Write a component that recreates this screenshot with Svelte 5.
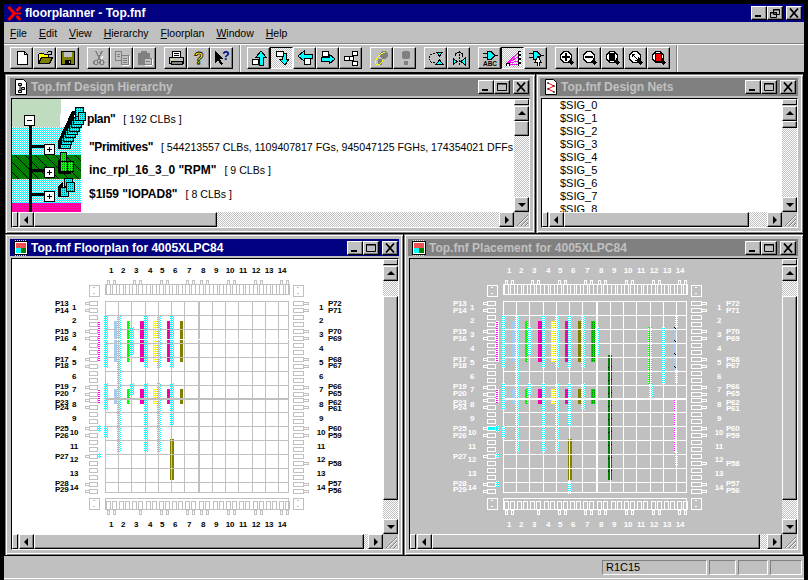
<script>
	const menus = [
		['F', 'ile'],
		['E', 'dit'],
		['V', 'iew'],
		['H', 'ierarchy'],
		['F', 'loorplan'],
		['W', 'indow'],
		['H', 'elp']
	]

	const lens = (inner) =>
		`<path d="M10 10l4 4" stroke="#000" stroke-width="3" fill="none"/><circle cx="7" cy="7" r="5.5" fill="#fff" stroke="#000" stroke-width="1.4"/>${inner}`

	const icons = {
		new: `<path d="M3.5 1.5h7l3 3v10h-10z" fill="#fff" stroke="#000"/><path d="M10.5 1.5v3h3" fill="none" stroke="#000"/>`,
		open: `<path d="M1.5 13.5v-9l1-1h4l1 1h4v2" fill="#ff0" stroke="#000"/><path d="M1.5 13.5l3-6h11l-3 6z" fill="#808000" stroke="#000"/><path d="M10 3c1-2 3-2 4-1M14 1v3h-2" fill="none" stroke="#000"/>`,
		save: `<path d="M1.5 1.5h13v13h-13z" fill="#808000" stroke="#000"/><path d="M4 2h8v5H4z" fill="#c0c0c0"/><path d="M5 10h6v4H5z" fill="#000"/><path d="M9 11h1v2H9z" fill="#c0c0c0"/>`,
		cut: `<path d="M5 1l4 9M11 1l-4 9" stroke="#808080" stroke-width="1.5" fill="none"/><circle cx="5" cy="12.5" r="2" fill="none" stroke="#808080" stroke-width="1.3"/><circle cx="11" cy="12.5" r="2" fill="none" stroke="#808080" stroke-width="1.3"/><path d="M12 6l-2 3" stroke="#fff"/>`,
		copy: `<path d="M1.5 1.5h6v9h-6zM7.5 5.5h7v9h-7z" fill="#c0c0c0" stroke="#808080"/><path d="M3 4h3M3 6h3M9 8h4M9 10h4M9 12h4" stroke="#808080"/><path d="M8 15h7M15 6v9" stroke="#fff"/>`,
		paste: `<path d="M1.5 3.5h11v11h-11z" fill="#808080" stroke="#808080"/><path d="M4 1h6v3H4z" fill="#808080"/><path d="M7.5 8.5h7v6h-7z" fill="#c0c0c0" stroke="#808080"/><path d="M9 11h4" stroke="#808080"/><path d="M8 15h7M15 9v6" stroke="#fff"/>`,
		print: `<path d="M4.5 1.5h8v6h-8z" fill="#fff" stroke="#000"/><path d="M6 3h5M6 5h5" stroke="#000"/><path d="M1.5 7.5h14v6h-14z" fill="#c0c0c0" stroke="#000"/><path d="M3 11.5h11v3H3z" fill="#808080" stroke="#000"/><path d="M3 9h2" stroke="#ff0"/>`,
		help: `<text x="8" y="13.500" text-anchor="middle" font-family="Liberation Sans" font-weight="700" font-size="16" fill="#ff0" stroke="#000" stroke-width="0.800">?</text>`,
		what: `<path d="M1 1v12l3-3 3 5 2-1-3-5h4z" fill="#000"/><text x="12" y="10" text-anchor="middle" font-family="Liberation Sans" font-weight="700" font-size="12" fill="#000080">?</text>`,
		up: `<path d="M10 1l5 6h-3v8H8V7H5z" fill="#0ff" stroke="#000"/><path d="M1.5 9.5h6v5h-6z" fill="#fff" stroke="#000"/>`,
		down: `<path d="M11 15l4-6h-3V3H8v6H5z" fill="#0ff" stroke="#000"/><path d="M2.5 1.5h7v5h-7z" fill="#fff" stroke="#000"/>`,
		left: `<path d="M1 6l6-5v3h8v4H7v3z" fill="#0ff" stroke="#000"/><path d="M7.5 8.5h6v6h-6z" fill="#fff" stroke="#000"/>`,
		right: `<path d="M15 9l-6-5v3H1v4h8v3z" fill="#0ff" stroke="#000"/><path d="M2.5 1.5h6v5h-6z" fill="#fff" stroke="#000"/>`,
		tree: `<path d="M1.5 6.5h5v4h-5zM9.5 1.5h5v4h-5zM6.5 6.5h4v4h-4zM9.5 11.5h5v4h-5z" fill="#fff" stroke="#000"/>`,
		foot: `<ellipse cx="10" cy="5" rx="4" ry="4" fill="#808080"/><ellipse cx="6" cy="12" rx="2.5" ry="3" fill="#808080"/><path d="M2 14C0 9 7 3 11 2" fill="none" stroke="#ff0"/><path d="M2 14c4 3 7-3 6-4" fill="none" stroke="#ff0"/>`,
		foot2: `<ellipse cx="9" cy="5" rx="4.5" ry="4.5" fill="#808080"/><ellipse cx="9" cy="13" rx="2.5" ry="2.5" fill="#808080"/>`,
		swap: `<path d="M8 2h7l-3.500 4zM8 14h7l-3.500-4z" fill="#0ff" stroke="#000"/><path d="M7 4C2 3 0 7 2 10M7 12C4 13 3 12 2 11" fill="none" stroke="#000" stroke-dasharray="2 1"/>`,
		mirror: `<path d="M2 8v7l4-3.500zM14 8v7l-4-3.500z" fill="#0ff" stroke="#000"/><path d="M8 1v14" stroke="#000" stroke-dasharray="2 1"/><path d="M4 7C3 1 13 1 12 7" fill="none" stroke="#000"/>`,
		abc: `<path d="M5 1.500h4l4 4-4 4H5z" fill="#0ff" stroke="#000"/><path d="M1 3.500h4M1 7.500h4M13 5.500h3" stroke="#000"/><text x="8" y="16" text-anchor="middle" font-family="Liberation Sans" font-weight="700" font-size="6.500" fill="#000">ABC</text>`,
		rats: `<path d="M1 14L13 3M1 14l12-7M1 14l12-3M1 14h12" stroke="#f0f" fill="none"/><path d="M1 13h3v3H1zM13 1h3v3h-3zM13 5h3v3h-3zM13 9h3v3h-3zM13 13h3v3h-3z" fill="#fff" stroke="#000"/>`,
		probe: `<path d="M5 1.500h4l4 4-4 4H5z" fill="#0ff" stroke="#000"/><path d="M1 3.500h4M1 7.500h4M13 5.500h3" stroke="#000"/><path d="M10 6l-3 6h2v4h2v-4h2z" fill="#fff" stroke="#000"/>`,
		zin: lens(`<path d="M3 6h8v2H3zM6 3h2v8H6z" fill="#000"/>`),
		zout: lens(`<path d="M3 6h8v2H3z" fill="#000"/>`),
		zfit: lens(`<path d="M4 3h6v8H4z" fill="#000"/>`),
		zfull: lens(`<path d="M4 4l6 6M4 4h3M4 4v3M10 10H7M10 10V7" fill="none" stroke="#000"/>`),
		zsel: lens(`<path d="M4 3h6v8H4z" fill="#f00" stroke="#000"/>`)
	}

	const tools = [
		['new', 'open', 'save'],
		['cut', 'copy', 'paste'],
		['print', 'help', 'what'],
		'sep',
		['up', 'down!', 'left', 'right', 'tree'],
		['foot', 'foot2'],
		['swap', 'mirror'],
		['abc', 'rats!', 'probe'],
		['zin', 'zout', 'zfit', 'zfull', 'zsel'],
		'sep'
	]

	const nets = Array.from({ length: 9 }, (_, i) => `$SIG_${i}`)

	const colX = [105, 118, 131, 145, 158, 171, 184, 198, 212, 225, 238, 252, 265, 278]
	const colNum = [111, 123, 136, 150, 162, 175, 189, 203, 216, 230, 243, 256, 269, 282]
	const rowY = [301, 315, 329, 343, 357, 371, 385, 398, 412, 426, 440, 454, 468, 482]
	const rowNum = [310, 323, 337, 351, 365, 379, 392, 407, 421, 435, 449, 462, 476, 490]
	const padCols = [0, 2, 4, 6, 7, 9, 11, 13]
	const padRows = [0, 2, 4, 6, 7, 9, 13]

	const leftPins = [
		['P13', 306], ['P14', 313], ['P15', 334], ['P16', 341], ['P17', 362], ['P18', 368],
		['P19', 389], ['P20', 396], ['P23', 405], ['P24', 410], ['P25', 431], ['P26', 438],
		['P27', 459], ['P28', 486], ['P29', 492]
	]
	const rightPins = [
		['P72', 306], ['P71', 313], ['P70', 334], ['P69', 341], ['P68', 362], ['P67', 368],
		['P66', 389], ['P65', 396], ['P62', 405], ['P61', 411], ['P60', 431], ['P59', 438],
		['P58', 466], ['P57', 486], ['P56', 493]
	]

	// x, top, bottom, fill, width
	const cells = [
		[104, 315, 368, 'cy'], [104, 383, 410, 'cy'], [104, 426, 438, 'cy'],
		[117, 315, 452, 'cy'],
		[130, 327, 355, 'cy'], [130, 383, 395, 'cy'],
		[144, 315, 368, 'cy'], [144, 383, 452, 'cy'],
		[157, 315, 368, 'cy'], [157, 383, 452, 'cy'],
		[170, 315, 368, 'cy'], [170, 383, 425, 'cy'],
		[98, 321, 362, 'mg', 3], [98, 389, 403, 'mg', 3],
		[98, 425, 432, 'cy', 3], [98, 453, 458, 'cy', 3],
		[114, 321, 362, '#a6caf0', 3], [114, 389, 404, '#a6caf0', 3],
		[127, 321, 362, 'gr', 3], [127, 389, 404, 'gr', 3],
		[140, 321, 362, 'rd'], [140, 389, 404, 'rd'],
		[153, 321, 362, 'yl'], [153, 389, 404, 'yl'],
		[167, 321, 362, 'rd', 3], [167, 389, 404, 'rd', 3],
		[180, 321, 362, '#808000', 3], [180, 389, 404, '#808000', 3],
		[170, 439, 480, '#808000']
	]

	const placedCells = [
		[183, 315, 368, 'cy'], [183, 383, 410, 'cy'],
		[197, 327, 355, 'cy'],
		[193, 321, 362, 'dg'], [193, 389, 404, 'dg'],
		[210, 355, 480, 'tk'],
		[250, 327, 384, 'gr'], [251, 384, 397, 'cy'],
		[264, 327, 384, 'cy'],
		[277, 315, 327, 'cy', 3], [276, 327, 370, 'bt', 3], [277, 370, 384, 'cy', 3],
		[276, 398, 452, 'mg', 3], [277, 452, 465, 'cy', 3],
		[170, 481, 494, 'cy'], [98, 481, 487, 'cy', 3]
	]

	const fillOf = (f) => (f.length === 2 ? `url(#h-${f})` : f)
</script>

{#snippet icon(name)}
	<svg class="ico" width="16" height="16" viewBox="0 0 16 16">{@html icons[name]}</svg>
{/snippet}

{#snippet capBtn(kind)}
	<span class="cap">
		<svg width="12" height="10" viewBox="0 0 12 10">
			{#if kind === 'min'}
				<rect x="2" y="7" width="6" height="2" fill="#000" />
			{:else if kind === 'max'}
				<path d="M1.500 1.500h9v7h-9z M1 2h10" fill="none" stroke="#000" />
			{:else if kind === 'restore'}
				<path d="M4.500 1.500h6v5h-6z M4 2h7 M1.500 4.500h6v5h-6z M1 5h7" fill="#c0c0c0" stroke="#000" />
			{:else}
				<path d="M2 0.500l8 9M10 0.500l-8 9" fill="none" stroke="#000" stroke-width="1.800" />
			{/if}
		</svg>
	</span>
{/snippet}

{#snippet docIcon(kind)}
	<svg class="docicon" width="14" height="16" viewBox="0 0 14 16">
		{#if kind === 'plan'}
			<rect x="0.500" y="1.500" width="13" height="13" fill="#fff" stroke="#000" />
			<rect x="2" y="3" width="10" height="5" fill="#f05050" />
			<rect x="2" y="8" width="5" height="5" fill="#0ff" />
			<rect x="7" y="8" width="5" height="5" fill="#008000" />
			<path d="M1 0.500h12M1 15.500h12" stroke="#ff0" stroke-dasharray="1 1" />
		{:else}
			<path d="M1.500 0.500h8l3 3v12h-11z" fill="#fff" stroke="#000" />
			{#if kind === 'hier'}
				<path d="M4.500 4.500h3v2h-3zM7.500 8.500h3v2h-3zM4.500 11.500h3v2h-3zM6 7v5" fill="#c0c0c0" stroke="#000" />
			{:else}
				<path d="M4 4l6 3-6 3 6 3" fill="none" stroke="#f00" />
				<path d="M3 4h2M3 10h2M9 7h2M9 13h2" stroke="#000" />
			{/if}
		{/if}
	</svg>
{/snippet}

{#snippet titleBar(text, kind, active)}
	<div class="title" class:active>
		{@render docIcon(kind)}
		<span class="title-text">{text}</span>
		<span class="caps">
			{@render capBtn('min')}
			{@render capBtn('max')}
			<span class="capgap"></span>
			{@render capBtn('close')}
		</span>
	</div>
{/snippet}

{#snippet arrow(dir)}
	<span class="sbtn arrow-{dir}"></span>
{/snippet}

{#snippet vbar(before, thumb)}
	<div class="vbar">
		<span class="split-v"></span>
		{@render arrow('up')}
		{#if before}<span class="dither" style="height:{before}px"></span>{/if}
		<span class="thumb" style="height:{thumb}px"></span>
		<span class="dither grow"></span>
		{@render arrow('down')}
	</div>
{/snippet}

{#snippet hbar(thumb)}
	<div class="hbar">
		<span class="split-h"></span>
		{@render arrow('left')}
		<span class="thumb" style="width:{thumb}px"></span>
		<span class="dither grow"></span>
		{@render arrow('right')}
	</div>
{/snippet}

{#snippet grip()}
	<svg class="grip" width="15" height="15" viewBox="0 0 15 15">
		<path d="M14 3L3 14M14 7l-7 7M14 11l-3 3" stroke="#808080" fill="none" />
		<path d="M14 4L4 14M14 8l-6 6M14 12l-2 2" stroke="#fff" fill="none" />
	</svg>
{/snippet}

{#snippet floorplan(fg, text, placed)}
	<svg class="plan" width="371" height="275" viewBox="12 259 371 275">
		{#each cells as [x, a, b, f, w = 4]}
			<rect {x} y={a} width={w} height={b - a} fill={fillOf(f)} />
		{/each}
		{#if placed}
			{#each placedCells as [x, a, b, f, w = 4]}
				<rect {x} y={a} width={w} height={b - a} fill={fillOf(f)} />
			{/each}
			<rect x="90" y="427" width="10" height="3" fill="#0ff" />
		{/if}

		{#each colX as x, i}
			<rect {x} y="301" width={i === 7 ? 2 : 1} height="192" fill={fg} />
		{/each}
		<rect x="288" y="301" width="1" height="192" fill={fg} />
		{#each rowY as y, i}
			<rect x="105" {y} width="184" height={i === 7 ? 2 : 1} fill={fg} />
		{/each}
		<rect x="105" y="492" width="184" height="1" fill={fg} />
		{#if !placed}
			<rect x="97" y="339" width="195" height="1" fill="#fff" />
		{/if}

		<g fill="none" stroke={fg}>
			<path d="M105.500 284.500h183v10h-183zM105.500 498.500h183v11h-183z" />
			{#each colX as x, i}
				<path d="M{x + 1.5} 284.500h4v10h-4zM{x + 7.5} 284.500h4v10h-4z" />
				<path d="M{x + 1.5} 501.500h4v8h-4zM{x + 7.5} 501.500h4v8h-4z" />
				{#if padCols.includes(i)}
					<path d="M{x + 2.5} 280.500h2v4h-2zM{x + 8.5} 280.500h2v4h-2z" />
					{#if i === 2}
						<path d="M{x + 8.5} 510.500h2v4h-2z" />
					{:else}
						<path d="M{x + 2.5} 510.500h2v4h-2zM{x + 8.5} 510.500h2v4h-2z" />
					{/if}
				{/if}
			{/each}
			{#each rowY as y, i}
				<path d="M89.500 {y + 0.5}h8v4h-8zM89.500 {y + 7.5}h8v4h-8z" />
				<path d="M293.500 {y + 0.5}h10v4h-10zM293.500 {y + 7.5}h10v4h-10z" />
				{#if padRows.includes(i)}
					<path d="M85.500 {y + 1.5}h4v2h-4zM85.500 {y + 8.5}h4v2h-4z" />
					<path d="M303.500 {y + 1.5}h5v2h-5zM303.500 {y + 8.5}h5v2h-5z" />
				{:else if i === 11}
					<path d="M85.500 {y + 1.5}h4v2h-4z" />
					<path d="M303.500 {y + 8.5}h5v2h-5z" />
				{/if}
			{/each}
			{#each [[89, 285], [293, 285], [89, 498], [293, 498]] as [x, y]}
				<path d="M{x + 0.5} {y + 0.5}h10v11h-10z" />
				<path d="M{x + 3.5} {y + 2.5}h2M{x + 3.5} {y + 8.5}h2" />
			{/each}
		</g>

		<g class="labels" fill={text}>
			{#each colNum as x, i}
				<text {x} y="273" text-anchor="middle">{i + 1}</text>
				<text {x} y="527" text-anchor="middle">{i + 1}</text>
			{/each}
			{#each rowNum as y, i}
				<text x="74" {y} text-anchor="middle">{i + 1}</text>
				<text x="321" {y} text-anchor="middle">{i + 1}</text>
			{/each}
			{#each leftPins as [name, y]}
				<text x="55" {y}>{name}</text>
			{/each}
			{#each rightPins as [name, y]}
				<text x="328" {y}>{name}</text>
			{/each}
		</g>
	</svg>
{/snippet}

<svg class="defs" width="0" height="0" aria-hidden="true">
	<defs>
		<pattern id="h-cy" width="2" height="2" patternUnits="userSpaceOnUse">
			<rect width="2" height="2" fill="#fff" />
			<rect width="1" height="1" fill="#0ff" />
			<rect x="1" y="1" width="1" height="1" fill="#0ff" />
		</pattern>
		<pattern id="h-mg" width="3" height="2" patternUnits="userSpaceOnUse">
			<rect width="3" height="2" fill="#fff" />
			<rect width="1" height="1" fill="#f0f" />
			<rect x="2" width="1" height="1" fill="#f0f" />
		</pattern>
		<pattern id="h-gr" width="4" height="2" patternUnits="userSpaceOnUse">
			<rect width="4" height="2" fill="#0f0" />
			<rect x="1" width="2" height="1" fill="#fff" />
		</pattern>
		<pattern id="h-rd" width="2" height="2" patternUnits="userSpaceOnUse">
			<rect width="2" height="2" fill="#ff00c0" />
			<rect width="1" height="1" fill="#e00090" />
		</pattern>
		<pattern id="h-yl" width="2" height="2" patternUnits="userSpaceOnUse">
			<rect width="2" height="2" fill="#ff0" />
			<rect width="1" height="1" fill="#fff" />
		</pattern>
		<pattern id="h-dg" width="2" height="2" patternUnits="userSpaceOnUse">
			<rect width="2" height="2" fill="#00e000" />
			<rect width="1" height="1" fill="#008000" />
		</pattern>
		<pattern id="h-tk" width="4" height="13" patternUnits="userSpaceOnUse">
			<rect width="4" height="13" fill="#008000" />
			<path d="M1 2l2 2" stroke="#000" />
		</pattern>
		<pattern id="h-bt" width="4" height="13" patternUnits="userSpaceOnUse">
			<rect width="4" height="13" fill="#a6caf0" />
			<path d="M0 2l2 2" stroke="#000" />
		</pattern>
		<pattern id="dots" width="2" height="2" patternUnits="userSpaceOnUse">
			<rect width="2" height="2" fill="#fff" />
			<rect width="1" height="1" fill="#0ff" />
			<rect x="1" y="1" width="1" height="1" fill="#0ff" />
		</pattern>
		<pattern id="reds" width="2" height="2" patternUnits="userSpaceOnUse">
			<rect width="2" height="2" fill="#ff00c0" />
			<rect width="1" height="1" fill="#ff0080" />
		</pattern>
		<pattern id="dgreen" width="10" height="10" patternUnits="userSpaceOnUse">
			<rect width="10" height="10" fill="#008000" />
			<path d="M0 0l10 10" stroke="#000" />
		</pattern>
		<pattern id="cube" width="2" height="2" patternUnits="userSpaceOnUse">
			<rect width="2" height="2" fill="#0ff" />
			<rect width="1" height="1" fill="#008080" />
		</pattern>
		<pattern id="gcube" width="2" height="2" patternUnits="userSpaceOnUse">
			<rect width="2" height="2" fill="#0f0" />
			<rect width="1" height="1" fill="#008000" />
		</pattern>
	</defs>
</svg>

<div class="screen">
	<div class="app">
		<div class="title main active">
			<svg class="logo" width="15" height="15" viewBox="0 0 15 15">
				<path d="M1.500 1l6 6.500-6 6.500M13.500 1L9.500 5M13.500 14l-4-4" fill="none" stroke="#f00" stroke-width="3" />
				<path d="M9 7.500h5" stroke="#f00" stroke-width="2" />
			</svg>
			<span class="main-text">floorplanner - Top.fnf</span>
			<span class="caps main-caps">
				{@render capBtn('min')}
				{@render capBtn('restore')}
				<span class="capgap"></span>
				{@render capBtn('close')}
			</span>
		</div>

		<nav class="menu">
			{#each menus as [key, rest]}
				<span class="menu-item"><u>{key}</u>{rest}</span>
			{/each}
		</nav>

		<div class="toolbar">
			{#each tools as group}
				{#if group === 'sep'}
					<span class="sep"></span>
				{:else}
					<div class="tools">
						{#each group as tool}
							{@const on = tool.endsWith('!')}
							<span class="tool" class:on>{@render icon(on ? tool.slice(0, -1) : tool)}</span>
						{/each}
					</div>
				{/if}
			{/each}
		</div>

		<div class="mdi">
			<div class="row upper">
				<section class="win hier-win">
					{@render titleBar('Top.fnf Design Hierarchy', 'hier', false)}
					<div class="client">
						<div class="hier">
							<svg class="tree" width="76" height="113" viewBox="12 99 76 113">
								<rect x="12" y="99" width="49" height="28" fill="#c0dcc0" />
								<rect x="60" y="114" width="26" height="13" fill="#fff" />
								<rect x="12" y="127" width="69" height="28" fill="url(#dots)" />
								<rect x="12" y="155" width="69" height="24" fill="url(#dgreen)" />
								<rect x="12" y="179" width="69" height="24" fill="url(#dots)" />
								<rect x="12" y="203" width="69" height="9" fill="url(#reds)" />
								<rect x="29" y="125" width="3" height="87" fill="#000" />
								<path d="M30 146h15M30 170h15M30 194h15" stroke="#000" stroke-width="3" />
								{#each [[24, 115, '-'], [44, 144, '+'], [44, 167, '+'], [44, 191, '+']] as [x, y, s]}
									<rect x={x + 0.5} y={y + 0.5} width="10" height="10" fill="#fff" stroke="#000" />
									<path d="M{x + 3} {y + 5.5}h5" stroke="#000" />
									{#if s === '+'}
										<path d="M{x + 5.5} {y + 3}v5" stroke="#000" />
									{/if}
								{/each}
								<path d="M58 141l14-30h4l-13 38h-5z" fill="#000" />
								{#each Array(9) as _, i}
									<rect x={60 + i * 1.9} y={141 - i * 3.4} width="10" height="7" fill="url(#cube)" stroke="#000" />
								{/each}
								<rect x="75" y="107" width="8" height="9" fill="url(#cube)" stroke="#000" />
								<rect x="78" y="112" width="7" height="8" fill="url(#cube)" stroke="#000" />
								<rect x="58" y="160" width="3" height="13" fill="#000" />
								<rect x="60" y="152" width="6" height="9" fill="url(#gcube)" stroke="#000" />
								<rect x="60" y="161" width="7" height="10" fill="url(#gcube)" stroke="#000" />
								<rect x="67" y="161" width="6" height="10" fill="url(#gcube)" stroke="#000" />
								<path d="M59 171h12v3H59z" fill="#000" />
								<path d="M58 186l5-4v15h-5z" fill="#000" />
								<rect x="64" y="178" width="8" height="8" fill="url(#cube)" stroke="#000" />
								<rect x="60" y="187" width="8" height="9" fill="url(#cube)" stroke="#000" />
								<rect x="66" y="182" width="8" height="9" fill="url(#cube)" stroke="#000" />
							</svg>
							<div class="hier-rows">
								<div class="hrow first"><b class="tight">plan"</b><span class="count">[ 192 CLBs ]</span></div>
								<div class="hrow"><b class="tight">"Primitives"</b><span class="count">[ 544213557 CLBs, 1109407817 FGs, 945047125 FGHs, 174354021 DFFs</span></div>
								<div class="hrow"><b>inc_rpl_16_3_0 "RPM"</b><span class="count">[ 9 CLBs ]</span></div>
								<div class="hrow"><b>$1I59 "IOPAD8"</b><span class="count">[ 8 CLBs ]</span></div>
							</div>
						</div>
						{@render vbar(0, 15)}
						{@render hbar(183)}
						{@render grip()}
					</div>
				</section>

				<section class="win nets-win">
					{@render titleBar('Top.fnf Design Nets', 'nets', false)}
					<div class="client">
						<ul class="nets">
							{#each nets as net}
								<li>{net}</li>
							{/each}
						</ul>
						{@render vbar(0, 7)}
						{@render hbar(185)}
						{@render grip()}
					</div>
				</section>
			</div>

			<div class="row lower">
				<section class="win low plan-win">
					{@render titleBar('Top.fnf Floorplan for 4005XLPC84', 'plan', true)}
					<div class="client">
						{@render floorplan('#c0c0c0', '#000', false)}
						{@render vbar(15, 204)}
						{@render hbar(330)}
						{@render grip()}
					</div>
				</section>

				<section class="win low place-win">
					{@render titleBar('Top.fnf Placement for 4005XLPC84', 'plan', false)}
					<div class="client grey">
						{@render floorplan('#fff', '#fff', true)}
						{@render vbar(15, 204)}
						{@render hbar(328)}
						{@render grip()}
					</div>
				</section>
			</div>
		</div>

		<footer class="status">
			<span class="field coord">R1C15</span>
			<span class="field f2"></span>
			<span class="field f3"></span>
			<span class="field f4"></span>
		</footer>
	</div>
</div>

<style>
	:global(body) {
		margin: 0;
		background: #000;
	}
	.defs {
		position: absolute;
	}
	.screen {
		width: 808px;
		height: 580px;
		box-sizing: border-box;
		padding: 4px 4px 0;
		background: #000;
		overflow: hidden;
		font-family: 'Liberation Sans', Arial, sans-serif;
		font-size: 11px;
		color: #000;
	}
	.app {
		height: 576px;
		display: flex;
		flex-direction: column;
		background: #c0c0c0;
	}
	.title {
		height: 18px;
		flex: none;
		display: flex;
		align-items: center;
		background: #808080;
		color: #c0c0c0;
		font-weight: 700;
		font-size: 12px;
	}
	.title.active {
		background: #000080;
		color: #fff;
	}
	.logo {
		margin-left: 3px;
		margin-right: 3px;
	}
	.docicon {
		margin: 0 3px 0 4px;
		flex: none;
	}
	.title-text {
		white-space: nowrap;
	}
	.caps {
		margin-left: auto;
		display: flex;
		align-items: center;
		margin-right: 1px;
	}
	.nets-win .caps,
	.place-win .caps {
		margin-right: 2px;
	}
	.main-caps {
		margin-right: 2px;
	}
	.cap {
		width: 16px;
		height: 14px;
		box-sizing: border-box;
		display: flex;
		align-items: center;
		justify-content: center;
		background: #c0c0c0;
		border: 1px solid;
		border-color: #fff #000 #000 #fff;
		box-shadow: inset -1px -1px 0 #808080;
	}
	.capgap {
		width: 3px;
	}
	.menu {
		height: 21px;
		flex: none;
		display: flex;
		align-items: center;
		gap: 12px;
		padding-left: 6px;
		font-size: 10.5px;
		border-bottom: 1px solid #808080;
	}
	.toolbar {
		height: 28px;
		flex: none;
		display: flex;
		align-items: flex-start;
		gap: 8px;
		padding: 2px 0 0 6px;
		border-top: 1px solid #fff;
		box-sizing: border-box;
	}
	.tools {
		display: flex;
	}
	.sep {
		width: 1px;
		height: 28px;
		margin: -2px -2px 0 -1px;
		background: #fff;
		box-shadow: -1px 0 0 #808080;
	}
	.tool {
		width: 23px;
		height: 22px;
		box-sizing: border-box;
		display: flex;
		align-items: center;
		justify-content: center;
		background: #c0c0c0;
		border: 1px solid;
		border-color: #fff #000 #000 #fff;
		box-shadow: inset -1px -1px 0 #808080;
	}
	.tool.on {
		border-color: #000 #fff #fff #000;
		box-shadow: none;
		background: repeating-conic-gradient(#c0c0c0 0 25%, #fff 0 50%) 0 0 / 2px 2px;
	}
	.ico {
		shape-rendering: crispEdges;
	}
	.mdi {
		flex: none;
		height: 484px;
		box-sizing: border-box;
		display: flex;
		flex-direction: column;
		border-top: 1px solid #000;
	}
	.row {
		display: flex;
		flex: none;
	}
	.upper {
		height: 161px;
	}
	.lower {
		height: 323px;
		margin-top: -1px;
	}
	.win {
		box-sizing: border-box;
		display: flex;
		flex-direction: column;
		background: #c0c0c0;
		border: 1px solid #000;
		box-shadow:
			inset 1px 1px 0 #808080,
			inset 2px 2px 0 #fff,
			inset -1px -1px 0 #808080,
			inset -2px -2px 0 #fff;
	}
	.low .title {
		height: 17px;
	}
	.hier-win {
		width: 532px;
		padding: 4px 5px 5px 5px;
	}
	.nets-win {
		width: 269px;
		margin-left: -1px;
		padding: 4px 5px 5px 4px;
	}
	.plan-win {
		width: 400px;
		padding: 5px 4px 5px 5px;
	}
	.place-win {
		width: 401px;
		margin-left: -1px;
		padding: 5px 5px 5px 4px;
	}
	.client {
		flex: 1;
		min-height: 0;
		margin: 2px 0 0 1px;
		display: grid;
		grid-template-columns: 1fr 15px;
		grid-template-rows: 1fr 15px;
		border: 1px solid;
		border-color: #000 #fff #fff #000;
		background: #fff;
		overflow: hidden;
	}
	.client.grey {
		background: #c0c0c0;
	}
	.hier {
		display: flex;
		overflow: hidden;
		min-width: 0;
		min-height: 0;
	}
	.tree {
		flex: none;
		shape-rendering: crispEdges;
	}
	.hier-rows {
		padding: 9px 0 0 1px;
		white-space: nowrap;
	}
	.hrow {
		height: 23.5px;
		line-height: 23.5px;
	}
	.hrow.first {
		margin-left: -2px;
		margin-bottom: 4px;
	}
	.hrow b {
		font-size: 12px;
	}
	.hrow b.tight {
		letter-spacing: -0.4px;
	}
	.count {
		margin-left: 8px;
		font-size: 10.6px;
	}
	.nets {
		list-style: none;
		margin: 0;
		padding: 0 0 0 18px;
		overflow: hidden;
		font-size: 11px;
	}
	.nets li {
		height: 13px;
		line-height: 13px;
	}
	.plan {
		display: block;
		shape-rendering: crispEdges;
	}
	.labels {
		font-size: 8px;
		font-weight: 700;
		letter-spacing: -0.3px;
	}
	.vbar {
		display: flex;
		flex-direction: column;
		background: #c0c0c0;
		grid-column: 2;
		grid-row: 1;
		min-height: 0;
	}
	.hbar {
		display: flex;
		background: #c0c0c0;
		grid-column: 1;
		grid-row: 2;
		min-width: 0;
	}
	.split-v {
		height: 6px;
		flex: none;
		margin-bottom: 1px;
		box-sizing: border-box;
		border: 1px solid;
		border-color: #fff #000 #000 #fff;
	}
	.split-h {
		width: 6px;
		flex: none;
		margin-right: 1px;
		box-sizing: border-box;
		border: 1px solid;
		border-color: #fff #000 #000 #fff;
	}
	.sbtn {
		width: 15px;
		height: 15px;
		flex: none;
		box-sizing: border-box;
		position: relative;
		background: #c0c0c0;
		border: 1px solid;
		border-color: #fff #000 #000 #fff;
		box-shadow: inset -1px -1px 0 #808080;
	}
	.sbtn::after {
		content: '';
		position: absolute;
		left: 3px;
		top: 3px;
		width: 0;
		height: 0;
		border: 4px solid transparent;
	}
	.arrow-up::after {
		border-bottom-color: #000;
		border-top-width: 0;
		top: 4px;
	}
	.arrow-down::after {
		border-top-color: #000;
		border-bottom-width: 0;
		top: 5px;
	}
	.arrow-left::after {
		border-right-color: #000;
		border-left-width: 0;
		left: 4px;
	}
	.arrow-right::after {
		border-left-color: #000;
		border-right-width: 0;
		left: 5px;
	}
	.thumb {
		flex: none;
		box-sizing: border-box;
		background: #c0c0c0;
		border: 1px solid;
		border-color: #fff #000 #000 #fff;
		box-shadow: inset -1px -1px 0 #808080;
	}
	.dither {
		flex: none;
		background: repeating-conic-gradient(#c0c0c0 0 25%, #fff 0 50%) 0 0 / 2px 2px;
	}
	.dither.grow {
		flex: 1;
		min-width: 0;
		min-height: 0;
	}
	.grip {
		grid-column: 2;
		grid-row: 2;
		background: #c0c0c0;
	}
	.status {
		flex: 1;
		display: flex;
		align-items: flex-start;
		justify-content: flex-end;
		gap: 2px;
		padding: 4px 2px 0 0;
		border-bottom: 1px solid #fff;
		margin-bottom: 1px;
	}
	.field {
		height: 15px;
		box-sizing: border-box;
		border: 1px solid;
		border-color: #808080 #fff #fff #808080;
		line-height: 13px;
		padding-left: 3px;
		font-size: 11px;
	}
	.coord {
		width: 105px;
	}
	.f2 {
		width: 27px;
	}
	.f3 {
		width: 30px;
	}
	.f4 {
		width: 32px;
	}
</style>
